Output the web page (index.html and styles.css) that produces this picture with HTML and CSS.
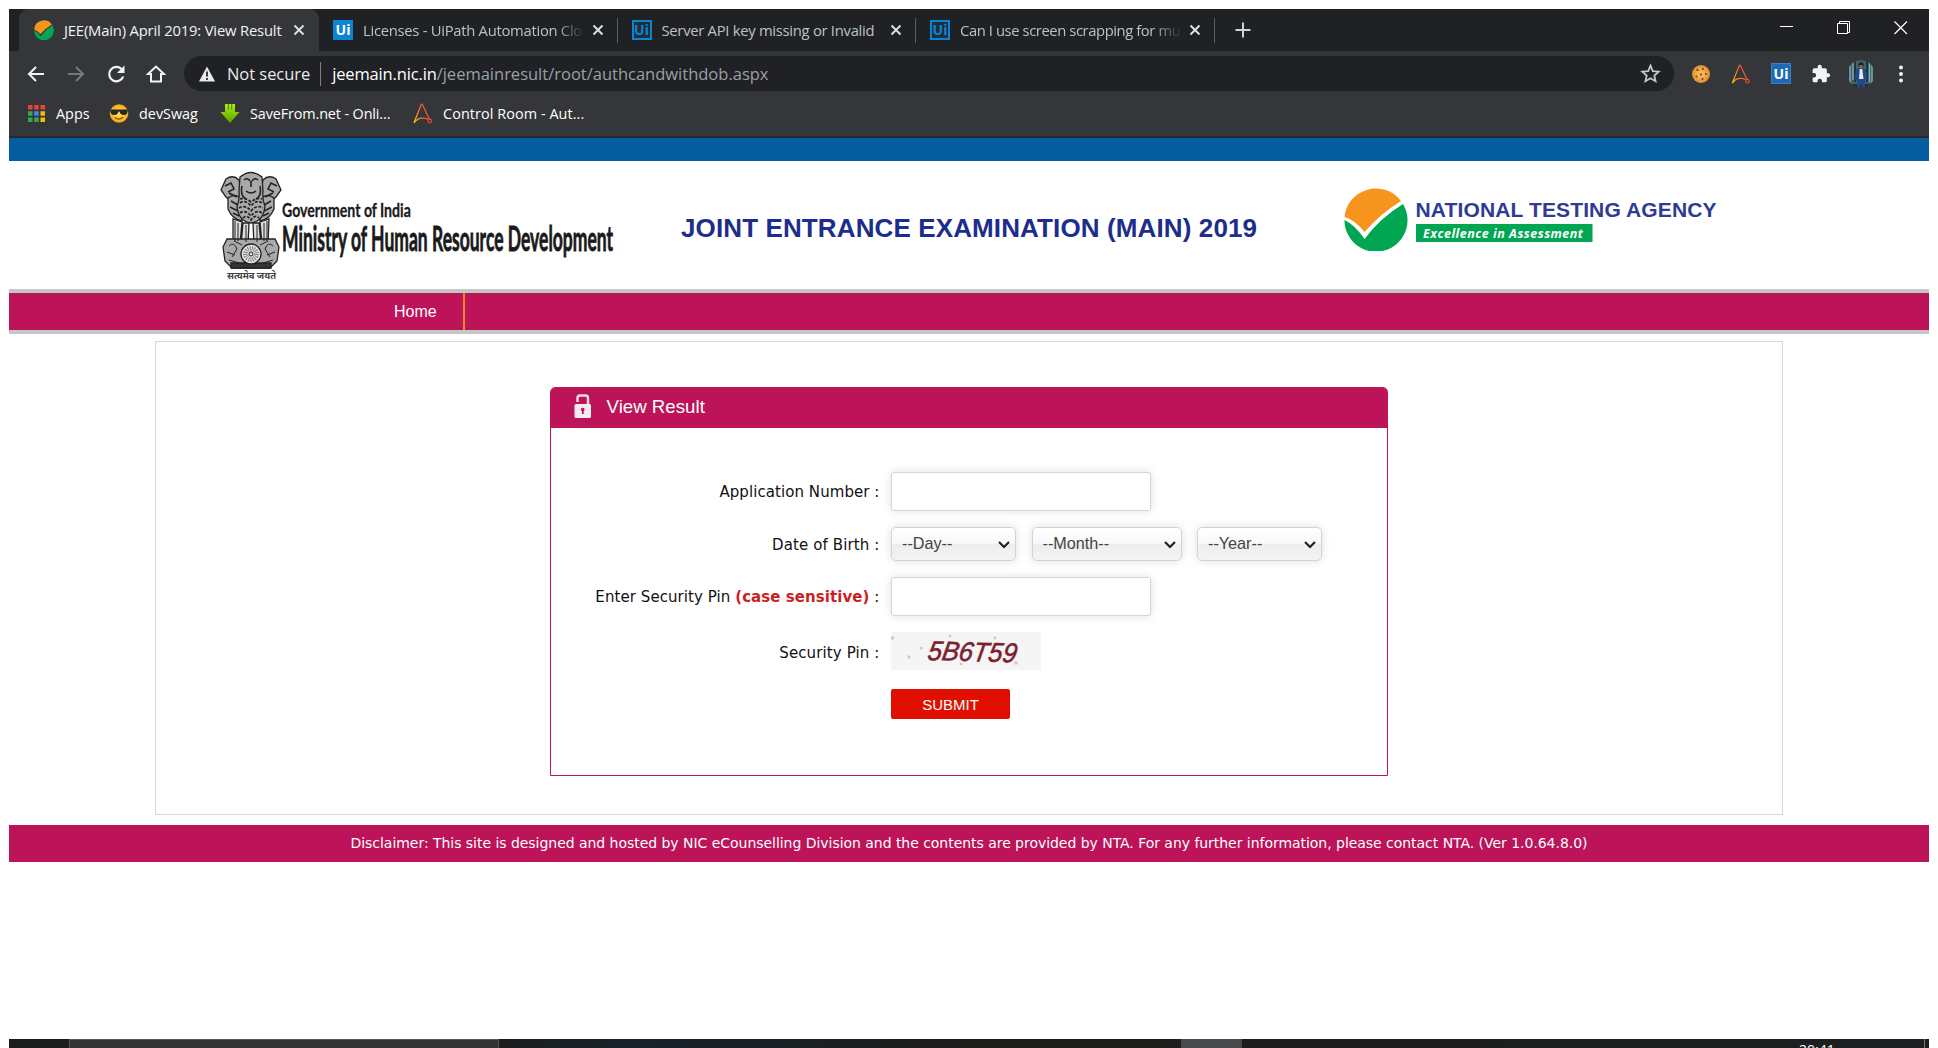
FILE: index.html
```html
<!DOCTYPE html>
<html lang="en">
<head>
<meta charset="utf-8">
<title>JEE(Main) April 2019: View Result</title>
<link rel="stylesheet" href="styles.css">
</head>
<body>
<svg class="defs" width="0" height="0" aria-hidden="true">
  <defs>
    <linearGradient id="flame" x1="0" y1="1" x2="1" y2="0.4"><stop offset="0" stop-color="#ffc20e"/><stop offset="0.45" stop-color="#f4772b"/><stop offset="1" stop-color="#e6492d"/></linearGradient>
    <linearGradient id="leaf" x1="0" y1="0" x2="0" y2="1"><stop offset="0" stop-color="#b4ea10"/><stop offset="1" stop-color="#4fa400"/></linearGradient>
    <radialGradient id="face"><stop offset="0.3" stop-color="#ffd93b"/><stop offset="1" stop-color="#f5a31b"/></radialGradient>
    <radialGradient id="biscuit"><stop offset="0.2" stop-color="#f6b95c"/><stop offset="1" stop-color="#e0902f"/></radialGradient>
    <symbol id="tick" viewBox="0 0 64 64">
      <path d="M0.5 30A31.5 31.5 0 0 1 57 14Q36 27 20.500 45Q11 33 0.500 30Z" fill="#f7941e"/>
      <path d="M0.500 33Q11 38 20.500 52Q36 31 59 17A31.500 31.500 0 1 1 0.500 33Z" fill="#00a651"/>
    </symbol>
    <symbol id="close" viewBox="0 0 12 12"><path d="M1.500 1.500L10.500 10.500M10.500 1.500L1.500 10.500" stroke="currentColor" stroke-width="1.900" fill="none"/></symbol>
    <symbol id="anywhere" viewBox="0 0 20 21"><path d="M1 20L8 2Q8.800 .3 9.600 2L16.500 16.500M1 20Q6 12.500 15.500 16.500" fill="none" stroke="url(#flame)" stroke-width="1.300"/><circle cx="16.800" cy="18" r="1.800" fill="none" stroke="#e6492d" stroke-width="1.200"/></symbol>
  </defs>
</svg>
<div class="screen">
  <div class="tabs">
    <div class="tab active"><svg class="fav" viewBox="0 0 64 64"><use href="#tick"/></svg><span class="t">JEE(Main) April 2019: View Result</span><svg class="x"><use href="#close"/></svg></div>
    <div class="tab"><span class="ui solid">Ui</span><span class="t fade">Licenses - UiPath Automation Clo</span><svg class="x"><use href="#close"/></svg></div>
    <div class="tab"><span class="ui line">Ui</span><span class="t">Server API key missing or Invalid</span><svg class="x"><use href="#close"/></svg></div>
    <div class="tab"><span class="ui line">Ui</span><span class="t fade tight">Can I use screen scrapping for mu</span><svg class="x"><use href="#close"/></svg></div>
    <svg class="plus" viewBox="0 0 16 16"><path d="M8 .5V15.500M.5 8H15.500" stroke="#d0d2d5" stroke-width="2"/></svg>
    <div class="win">
      <svg viewBox="0 0 14 14"><path d="M0 5.500H13" stroke="#fff"/></svg>
      <svg viewBox="0 0 14 14"><path d="M.5 2.500H10.500V12.500H.5ZM2.500 2.500V.5H12.500V11.500H10.500" stroke="#fff" fill="none"/></svg>
      <svg viewBox="0 0 14 14"><path d="M.5 .5L13 13M13 .5L.5 13" stroke="#fff" stroke-width="1.200"/></svg>
    </div>
  </div>
  <div class="toolbar">
    <svg class="nav" viewBox="0 0 20 20"><path d="M18 10H3M10 3L3 10L10 17" stroke="#f1f3f4" stroke-width="2" fill="none"/></svg>
    <svg class="nav" viewBox="0 0 20 20"><path d="M2 10H17M10 3L17 10L10 17" stroke="#77797c" stroke-width="2" fill="none"/></svg>
    <svg class="nav" viewBox="0 0 20 20"><path d="M17.200 12.500A7.200 7.200 0 1 1 15.500 5" stroke="#f1f3f4" stroke-width="2.200" fill="none"/><path d="M18.500 1.500V9H11Z" fill="#f1f3f4"/></svg>
    <svg class="nav" viewBox="0 0 20 20"><path d="M2 10L10 2.500L18 10H15V17.500H5V10Z" stroke="#f1f3f4" stroke-width="2" fill="none"/></svg>
    <div class="omnibox">
      <svg class="warn" viewBox="0 0 16 16"><path d="M8 .5L16 15.500H0Z" fill="#e8eaed"/><path d="M8 5.500V10.500M8 12V14" stroke="#202124" stroke-width="1.700"/></svg>
      <span class="ns">Not secure</span><i></i><span class="host">jeemain.nic.in</span><span class="path">/jeemainresult/root/authcandwithdob.aspx</span>
      <svg class="star" viewBox="0 0 20 20"><path d="M10 2.500L12.200 7.700L17.800 8.200L13.600 11.900L14.800 17.300L10 14.500L5.200 17.300L6.400 11.900L2.200 8.200L7.800 7.700Z" fill="none" stroke="#c6c8cb" stroke-width="1.700"/></svg>
    </div>
    <div class="ext">
      <svg viewBox="0 0 20 20"><circle cx="10" cy="10" r="9" fill="url(#biscuit)"/><g fill="#7c3f12"><circle cx="6.500" cy="6" r="1.100"/><circle cx="12" cy="5" r="1"/><circle cx="10" cy="10.500" r="1.100"/><circle cx="15" cy="10" r="1"/><circle cx="5.500" cy="12.500" r=".9"/><circle cx="11.500" cy="15" r="1"/></g></svg>
      <svg class="aa" viewBox="0 0 20 21"><use href="#anywhere"/></svg>
      <span class="ui badge">Ui</span>
      <svg viewBox="0 0 24 24"><path d="M20.500 11H19V7a2 2 0 0 0-2-2h-4V3.500a2.500 2.500 0 0 0-5 0V5H4a2 2 0 0 0-2 2v3.800h1.500a2.700 2.700 0 0 1 0 5.400H2V20a2 2 0 0 0 2 2h3.800v-1.500a2.700 2.700 0 0 1 5.400 0V22H17a2 2 0 0 0 2-2v-4h1.500a2.500 2.500 0 0 0 0-5z" fill="#f1f3f4"/></svg>
      <svg class="avatar" viewBox="0 0 28 28"><clipPath id="round"><circle cx="14" cy="14" r="13.700"/></clipPath><g clip-path="url(#round)"><path d="M0 0H28V28H0Z" fill="#41646b"/><path d="M3 0V28M6 0V20M22.500 3V22M25 0V28" stroke="#8fb0b3" stroke-width="1.200"/><path d="M8 0V22M20 0V22M27 6V28M1 8V28" stroke="#142b35" stroke-width="1.600"/><path d="M0 24H28V28H0Z" fill="#1a3038"/><path d="M9 10L12 8H16L19 10L20.500 19L18 20V28H15L14 22L13 28H10V20L7.500 19Z" fill="#23498a"/><path d="M12.700 9H15.300L16.500 19H12Z" fill="#e4ebf1"/><circle cx="14" cy="4.800" r="2.600" fill="#2b1c1a"/><path d="M12.700 5H15.300V8H12.700Z" fill="#9c6d58"/></g></svg>
      <svg viewBox="0 0 20 20"><g fill="#f1f3f4"><circle cx="10" cy="3.500" r="2"/><circle cx="10" cy="10" r="2"/><circle cx="10" cy="16.500" r="2"/></g></svg>
    </div>
  </div>
  <div class="bookmarks">
    <div class="bm b1"><svg viewBox="0 0 17 17"><path d="M0 0h4.500v4.500H0zM6.200 0h4.500v4.500H6.200zM12.500 0H17v4.500h-4.500z" fill="#ea4335"/><path d="M0 6.200h4.500v4.500H0zM0 12.500h4.500V17H0zM6.200 12.500h4.500V17H6.200z" fill="#34a853"/><path d="M6.200 6.200h4.500v4.500H6.200z" fill="#4285f4"/><path d="M12.500 6.200H17v4.500h-4.500zM12.500 12.500H17V17h-4.500z" fill="#fbbc04"/></svg><span>Apps</span></div>
    <div class="bm b2"><svg viewBox="0 0 20 20"><circle cx="10" cy="10" r="9.300" fill="url(#face)"/><path d="M1 6H19L18 10Q17 11.500 14.500 11.500Q11.500 11.500 10.500 8H9.500Q8.500 11.500 5.500 11.500Q3 11.500 2 10Z" fill="#26282d"/><path d="M6 14Q10 17.500 14 13.500" stroke="#7d4f12" stroke-width="1.300" fill="none"/></svg><span>devSwag</span></div>
    <div class="bm b3"><svg viewBox="0 0 20 20"><path d="M5 .5H15V8.500H19.500L10 19.500L.5 8.500H5Z" fill="url(#leaf)"/><path d="M8.300 0V6M11.700 0V6" stroke="#2c5b06" stroke-width=".8"/></svg><span>SaveFrom.net - Onli...</span></div>
    <div class="bm b4"><svg viewBox="0 0 20 21"><use href="#anywhere"/></svg><span>Control Room - Aut...</span></div>
  </div>
  <div class="blue"></div>
  <header>
    <svg class="emblem" viewBox="0 0 62 110">
      <g fill="#a9a9a9" stroke="#222" stroke-width="1.300">
        <path d="M6 8Q13 3 19 9L23 28L14 33L6 26L1 19Z"/><path d="M56 8Q49 3 43 9L39 28L48 33L56 26L61 19Z"/>
        <path d="M8 27Q14 22 21 27L22 50Q12 48 8 38Z"/><path d="M54 27Q48 22 41 27L40 50Q50 48 54 38Z"/>
        <path d="M20 6Q31 -3 42 6L43 20Q42 28 45 35Q44 50 31 52Q18 50 17 35Q20 28 19 20Z"/>
        <path d="M13 48L22 51L20 73H13ZM23 52H29L28 74H21ZM33 52H39L41 74H34ZM40 51L49 48L48 73H42Z" fill="#ddd"/>
        <path d="M7 68H55L59 76L57 90L50 97H12L5 90L3 76Z"/>
        <path d="M11 92H51V97H11Z" fill="#333"/>
        <circle cx="31" cy="83" r="10" fill="#e5e5e5"/>
      </g>
      <g fill="none" stroke="#222">
        <circle cx="31" cy="83" r="5.500" stroke-dasharray="1 1" stroke-width="5" stroke="#888"/>
        <circle cx="31" cy="83" r="2"/>
        <path d="M24 9Q27 6 30 10M32 10Q35 6 38 9M31 10V16M26 20Q31 24 36 20M22 15Q20 25 26 28M40 15Q42 25 36 28" stroke-width="1.600"/>
        <path d="M20 28Q25 26 31 31Q37 26 42 28M20 32Q25 28 31 35Q37 28 42 32M19 37Q25 33 31 40Q37 33 43 37M20 42Q25 38 31 45Q37 38 42 42M23 47Q27 43 31 49Q35 43 39 47" stroke-dasharray="3 1.500" stroke-width="1.700"/>
        <path d="M5 15L11 12L14 18L8 21M57 15L51 12L48 18L54 21M11 30L18 34M10 36L18 40M13 42L19 45M51 30L44 34M52 36L44 40M49 42L43 45M9 22L17 26M53 22L45 26" stroke-width="1.500"/>
        <path d="M9 75Q14 70 17 78L12 86M53 75Q48 70 45 78L50 86M7 81L15 84M55 81L47 84M15 50V70M47 50V70M18 52V70M44 52V70M26 54V71M37 54V71M9 89L19 92M53 89L43 92M14 70L22 74M48 70L40 74"/>
      </g>
      <text x="7" y="108" textLength="49" lengthAdjust="spacingAndGlyphs">सत्यमेव जयते</text>
    </svg>
    <svg class="ministry" viewBox="0 0 340 90">
      <text class="gov" transform="scale(.8 1)" x="0" y="36" textLength="161" lengthAdjust="spacingAndGlyphs">Government of India</text>
      <text class="min" transform="scale(.55 1)" x="0" y="70" textLength="602" lengthAdjust="spacingAndGlyphs">Ministry of Human Resource Development</text>
    </svg>
    <h1>JOINT ENTRANCE EXAMINATION (MAIN) 2019</h1>
    <svg class="nta" viewBox="0 0 380 70">
      <svg x="0" y="2" width="64" height="64"><use href="#tick"/></svg>
      <text class="agency" x="71.500" y="32" textLength="301">NATIONAL TESTING AGENCY</text>
      <path d="M72 39H248.500V57H72Z" fill="#00a651"/>
      <text class="motto" x="79" y="52.500" textLength="160">Excellence in Assessment</text>
    </svg>
  </header>
  <nav class="menu"><a>Home</a></nav>
  <main>
    <section class="login">
      <h2><svg viewBox="0 0 18 25"><path d="M3.500 8V4Q3.500 1.500 6 1.500H11.500Q14 1.500 14 4V10" stroke="#f3dbe5" stroke-width="2.400" fill="none"/><rect x=".5" y="10" width="16.500" height="14" rx="1.500" fill="#f5eaf0"/><circle cx="8.700" cy="15.500" r="1.800" fill="#bd1358"/><path d="M7.900 15H9.700V20H7.900Z" fill="#bd1358"/></svg><span>View Result</span></h2>
      <form>
        <label>Application Number :</label><input type="text">
        <label class="l2">Date of Birth :</label>
        <div class="dob">
          <div class="pick day"><select><option>--Day--</option></select><svg viewBox="0 0 12 8"><path d="M1 1L6 6L11 1" fill="none" stroke="#222" stroke-width="2.200"/></svg></div>
          <div class="pick month"><select><option>--Month--</option></select><svg viewBox="0 0 12 8"><path d="M1 1L6 6L11 1" fill="none" stroke="#222" stroke-width="2.200"/></svg></div>
          <div class="pick day"><select><option>--Year--</option></select><svg viewBox="0 0 12 8"><path d="M1 1L6 6L11 1" fill="none" stroke="#222" stroke-width="2.200"/></svg></div>
        </div>
        <label>Enter Security Pin <b>(case sensitive)</b> :</label><input type="text">
        <label class="l4">Security Pin :</label>
        <svg class="captcha" viewBox="0 0 150 38"><path d="M0 0H150V38H0Z" fill="#f5f5f5"/><g fill="#cfc8ce"><circle cx="1.500" cy="6" r="1.800"/><circle cx="18" cy="25" r="1.700"/><circle cx="30" cy="16" r="1.600"/><circle cx="59" cy="4" r="1.500"/><circle cx="104" cy="6" r="1.500"/><circle cx="125" cy="31" r="1.800"/><circle cx="70" cy="32" r="1.300"/></g><text x="40" y="29" transform="skewX(-8) rotate(1.500 80 20)" textLength="89" lengthAdjust="spacingAndGlyphs">5B6T59</text></svg>
        <span></span><button type="button">SUBMIT</button>
      </form>
    </section>
  </main>
  <footer>Disclaimer: This site is designed and hosted by NIC eCounselling Division and the contents are provided by NTA. For any further information, please contact NTA. (Ver 1.0.64.8.0)</footer>
  <div class="taskbar"><div class="task"></div><div class="task2"></div><span class="clock">20:41</span><div class="peek"></div></div>
</div>
</body>
</html>
```
FILE: styles.css
```css
* { box-sizing: border-box; }
body { margin: 0; padding: 9px 9px 0; background: #fff; font-family: "Liberation Sans", Arial, sans-serif; height: 1048px; overflow: hidden; }
.defs { display: block; position: absolute; }
svg { display: block; flex: none; }
.screen { width: 1920px; height: 1039px; display: flex; flex-direction: column; overflow: hidden; }
.screen > * { flex: none; }
.tabs, .toolbar, .bookmarks { font-family: "Open Sans", sans-serif; color: #fff; white-space: nowrap; }

.tabs { height: 42px; background: #202124; display: flex; padding-left: 10px; font-size: 14.800px; color: #bdc1c6; }
.tab { width: 298.500px; height: 42px; padding: 0 14px 1px; display: flex; align-items: center; position: relative; letter-spacing: -.28px; }
.tab.active { width: 300px; padding-left: 15px; background: #35363a; color: #f1f3f4; border-radius: 10px 10px 0 0; letter-spacing: -.18px; }
.tab .tight { letter-spacing: -.42px; }
.fav { width: 20px; height: 20px; }
.tab .t { margin-left: 10px; width: 224px; }
.tab .fade { -webkit-mask-image: linear-gradient(90deg, #000 192px, transparent 222px); mask-image: linear-gradient(90deg, #000 192px, transparent 222px); }
.x { width: 12px; height: 12px; margin-left: 6px; color: #dfe1e5; }
.tab:not(.active)::after { content: ""; position: absolute; right: 0; top: 9px; width: 1px; height: 25px; background: #5b5d61; }
.ui { width: 20px; height: 20px; flex: none; font: 700 14px/20px "Open Sans", sans-serif; letter-spacing: 0; text-align: center; color: #fff; background: #0a85d1; }
.ui.line { background: #202d3a; border: 2px solid #0a85d1; color: #0a85d1; line-height: 16px; }
.ui.badge { background: #1f6ab4; border: 1px solid #3f7fc0; height: 21px; }
.plus { width: 16px; height: 16px; margin: 13px 0 0 20px; }
.win { margin-left: auto; margin-right: 21px; display: flex; gap: 43px; padding-top: 12px; }
.win svg { width: 14px; height: 14px; }

.toolbar { height: 45px; background: #35363a; display: flex; align-items: center; padding-left: 17px; }
.nav { width: 20px; height: 20px; margin-right: 20px; }
.omnibox { height: 35px; width: 1490px; margin-left: -2px; border-radius: 18px; background: #202124; display: flex; align-items: center; padding-left: 15px; font-size: 16.500px; }
.warn { width: 16px; height: 16px; margin-right: 12px; }
.omnibox i { width: 1px; height: 24px; background: #7d7f82; margin: 0 11px 0 10px; }
.ns { color: #e8eaed; letter-spacing: -.05px; }
.host { letter-spacing: -.15px; }
.path { color: #9aa0a6; }
.star { width: 21px; height: 21px; margin: 0 13px 0 auto; }
.ext { display: flex; align-items: center; margin-left: 17px; gap: 20px; }
.ext svg { width: 20px; height: 20px; }
.ext .avatar { width: 28px; height: 28px; margin: 0 -4px; }

.bookmarks { height: 42px; background: #35363a; border-bottom: 2px solid #28292c; display: flex; align-items: flex-start; font-size: 14.400px; padding: 6px 0 0 19px; }
.bm { display: flex; align-items: center; height: 22px; }
.bm svg { width: 20px; height: 21px; margin-right: 10px; }
.bm.b1 svg { width: 17px; height: 17px; margin-right: 11px; }
.b1 { width: 81px; } .b2 { width: 111px; } .b3 { width: 193px; letter-spacing: -.12px; } .b4 { letter-spacing: .08px; }
.blue { height: 23px; background: #055c9f; }

header { height: 128px; display: flex; background: #fff; }
.emblem { width: 62px; height: 110px; margin: 10px 0 0 211px; }
.emblem text { font: 700 10px "Noto Sans", sans-serif; fill: #444; }
.ministry { width: 340px; height: 90px; margin-top: 20px; }
.ministry text { font-family: "Lato", sans-serif; font-weight: 700; fill: #1a1a1a; }
.ministry .gov { font-size: 18px; stroke: #1a1a1a; stroke-width: .3px; }
.ministry .min { font-size: 34px; stroke: #1a1a1a; stroke-width: .8px; }
h1 { margin: 51px 0 0 59px; width: 577px; font-size: 26px; line-height: 32px; letter-spacing: .12px; color: #1d2d8c; white-space: nowrap; }
.nta { width: 380px; height: 70px; margin: 24px 0 0 86px; }
.agency { font: 700 21px "Liberation Sans", sans-serif; fill: #2e3b94; }
.motto { font: italic 700 12.500px "Open Sans", sans-serif; fill: #fff; }

.menu { height: 45px; border: solid #c6c6c6; border-width: 4px 0; background: #bd1358; }
.menu a { display: block; width: 456px; height: 37px; padding-left: 385px; border-right: 2px solid #ef8a1d; font-size: 16px; line-height: 37px; color: #fff; }
main { width: 1628px; height: 474px; margin: 7px 0 10px 146px; border: 1px solid #d6d6d6; padding: 45px 0 0 394px; }
.login { width: 838px; height: 389px; border: 1px solid #bd1358; border-radius: 5px 5px 0 0; }
h2 { margin: 0; height: 40px; background: #bd1358; color: #fff; font-size: 18.700px; font-weight: 400; display: flex; align-items: center; padding: 0 0 3px 23px; border-radius: 4px 4px 0 0; }
h2 svg { width: 18px; height: 25px; margin-right: 14.500px; }
form { display: grid; grid-template-columns: 328.500px 480px; column-gap: 11.500px; grid-template-rows: 39px 34px 39px 38px 33px; row-gap: 16px; padding-top: 44px; align-items: center; }
label { text-align: right; font: 15px "DejaVu Sans", sans-serif; letter-spacing: .07px; color: #111; white-space: nowrap; }
.l2 { padding-top: 2px; letter-spacing: .12px; }
.l4 { padding-top: 4px; letter-spacing: .12px; }
b { color: #cb1f1f; }
input { width: 260px; height: 39px; border: 1px solid #d5d5d5; border-radius: 3px; box-shadow: 0 0 10px rgba(0,0,0,.13); background: #fff; outline: 0; }
.dob { display: flex; }
.pick { position: relative; margin-right: 15.500px; }
.day { width: 125px; } .month { width: 150px; }
select { appearance: none; -webkit-appearance: none; width: 100%; height: 34px; border: 1px solid #d3d3d3; border-radius: 5px; padding: 0 10px 3px; font: 16.200px "Liberation Sans", Arial, sans-serif; color: #444; background: linear-gradient(#fff 0%, #f8f8f8 50%, #eee 51%, #f3f3f3 100%); box-shadow: 0 0 10px rgba(0,0,0,.13); }
.pick svg { position: absolute; right: 6px; top: 14px; width: 12px; height: 8px; }
.captcha { width: 150px; height: 38px; }
.captcha text { font: italic 27px "Liberation Sans", sans-serif; fill: #7c1f31; stroke: #7c1f31; stroke-width: .6px; }
button { align-self: end; width: 119px; height: 30px; border: 0; border-radius: 2px; background: #e10f00; color: #fff; font: 15px "Liberation Sans", Arial, sans-serif; padding: 0; }
footer { height: 37px; background: #bd1358; color: #fff; font: 14px/36px "DejaVu Sans", sans-serif; letter-spacing: -.038px; text-align: center; white-space: nowrap; }
.taskbar { margin-top: auto; height: 9px; background: linear-gradient(90deg, #1b1d1d, #1b1d1d 26%, #17222a 32%, #1c1c1a 50%, #1d1f20); display: flex; }
.task { width: 430px; margin-left: 60px; background: #333; border: 1px solid #555; border-bottom: 0; }
.task2 { width: 61px; margin-left: 682px; background: #48494b; }
.clock { width: 38px; height: 9px; overflow: hidden; margin-left: 557px; font: 14px/22px "Open Sans", sans-serif; color: #fff; }
.peek { width: 1px; background: #77797a; margin-left: 87px; }
```
